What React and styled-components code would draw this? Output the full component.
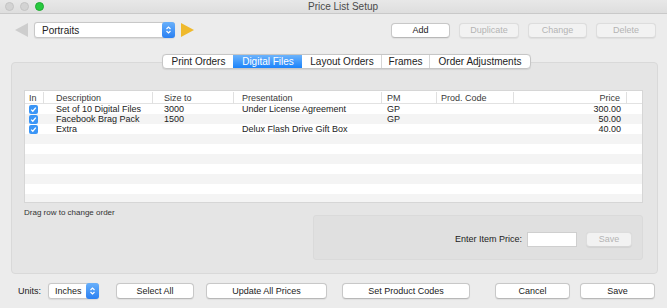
import React from "react"
import styled, { createGlobalStyle } from "styled-components"

const GlobalStyle = createGlobalStyle`
	html, body {
		margin: 0;
		padding: 0;
	}
	body {
		background: #ececec;
		font-family: "Liberation Sans", Arial, sans-serif;
		color: #222;
	}
	* {
		box-sizing: border-box;
	}
`

const Window = styled.div`
	width: 667px;
	height: 308px;
	overflow: hidden;
	display: flex;
	flex-direction: column;
	background: #ececec;
`

const TitleBar = styled.div`
	height: 14px;
	display: flex;
	align-items: center;
	padding-left: 5px;
	background: linear-gradient(#e8e8e8, #dedede);
	border-bottom: 1px solid #c9c9c9;
`

const Lights = styled.div`
	display: flex;
	gap: 6px;
`

const Light = styled.span`
	width: 9px;
	height: 9px;
	border-radius: 50%;
	background: ${(p) => (p.$on ? "#28c93f" : "#d3d3d3")};
	border: 1px solid ${(p) => (p.$on ? "#1eaa31" : "#c4c4c4")};
`

const Title = styled.div`
	margin-left: 264px;
	font-size: 10px;
	line-height: 13px;
	color: #4a4a4a;
`

const Toolbar = styled.div`
	display: flex;
	align-items: center;
	height: 16px;
	margin-top: 8px;
	padding: 0 11px 0 15px;
`

const Arrow = styled.span`
	width: 0;
	height: 0;
	border-top: 7px solid transparent;
	border-bottom: 7px solid transparent;
	${(p) =>
		p.$dir === "left"
			? `border-right: 13px solid #cdcdcd;`
			: `border-left: 13px solid #efb92c;`}
`

const Popup = styled.div`
	display: flex;
	align-items: center;
	justify-content: space-between;
	width: ${(p) => p.$w}px;
	height: 16px;
	margin: 0 6px;
	padding-left: ${(p) => p.$pad}px;
	background: #fff;
	border: 1px solid #c8c8c8;
	border-radius: 3px;
	box-shadow: 0 0.5px 1px rgba(0, 0, 0, 0.08);
	font-size: ${(p) => p.$fs}px;
	color: #222;
`

const Stepper = styled.span`
	width: 13px;
	height: 16px;
	margin: -1px -1px -1px 0;
	border-radius: 3px;
	background: linear-gradient(#68b0fb, #2a80f2);
	display: flex;
	align-items: center;
	justify-content: center;
`

const Spacer = styled.div`
	flex: 1;
`

const ButtonGroup = styled.div`
	display: flex;
	gap: ${(p) => p.$gap}px;
	align-items: center;
`

const Button = styled.div`
	width: ${(p) => p.$w}px;
	height: ${(p) => p.$h || 16}px;
	margin-left: ${(p) => p.$ml || 0}px;
	display: flex;
	align-items: center;
	justify-content: center;
	background: ${(p) => (p.$off ? "#f2f2f2" : "#fff")};
	border: 1px solid ${(p) => (p.$off ? "#dddddd" : "#c8c8c8")};
	border-bottom-color: ${(p) => (p.$off ? "#d6d6d6" : "#b8b8b8")};
	border-radius: 4px;
	box-shadow: 0 0.5px 1px rgba(0, 0, 0, 0.06);
	font-size: 9px;
	color: ${(p) => (p.$off ? "#b4b4b4" : "#222")};
`

const TabBar = styled.div`
	position: relative;
	z-index: 1;
	display: flex;
	margin-top: 16px;
	margin-left: 162px;
	height: 15px;
	align-self: flex-start;
	background: #fff;
	border: 1px solid #c6c6c6;
	border-radius: 4px;
	box-shadow: 0 0.5px 1px rgba(0, 0, 0, 0.08);
	overflow: hidden;
`

const Tab = styled.div`
	width: ${(p) => p.$w}px;
	display: flex;
	align-items: center;
	justify-content: center;
	font-size: 10px;
	color: ${(p) => (p.$active ? "#fff" : "#222")};
	background: ${(p) =>
		p.$active ? "linear-gradient(#6cb3fb, #1b83fb)" : "transparent"};
	border-left: 1px solid ${(p) => (p.$first ? "transparent" : "#d6d6d6")};
`

const GroupBox = styled.div`
	margin: -7px 9px 0 11px;
	height: 212px;
	padding: 27px 14px 0 12px;
	background: #e5e5e5;
	border: 1px solid #d9d9d9;
	border-radius: 4px;
	display: flex;
	flex-direction: column;
`

const cols = "19px 109px 81px 148px 55px 77px 113px 1fr"

const Table = styled.div`
	height: 113px;
	background: #fff;
	border: 1px solid #d6d6d6;
	overflow: hidden;
`

const HeaderRow = styled.div`
	display: grid;
	grid-template-columns: ${cols};
	height: 13px;
	border-bottom: 1px solid #e2e2e2;
`

const HeaderCell = styled.div`
	font-size: 9px;
	line-height: 12px;
	color: #3a3a3a;
	padding-left: ${(p) => p.$pad}px;
	padding-right: ${(p) => p.$pr || 0}px;
	text-align: ${(p) => p.$align || "left"};
	border-right: ${(p) => (p.$last ? "none" : "1px solid #e0e0e0")};
	margin: 1px 0;
`

const Row = styled.div`
	display: grid;
	grid-template-columns: ${cols};
	height: 10px;
	background: ${(p) => (p.$odd ? "#f4f4f4" : "#fff")};
`

const Cell = styled.div`
	font-size: 9px;
	line-height: 10px;
	color: #222;
	white-space: nowrap;
	padding-left: ${(p) => p.$pad}px;
	padding-right: ${(p) => p.$pr || 0}px;
	display: flex;
	align-items: center;
	justify-content: ${(p) => (p.$align === "right" ? "flex-end" : "flex-start")};
`

const Check = styled.span`
	width: 9px;
	height: 9px;
	border-radius: 2px;
	background: #3a95f6;
	display: flex;
	align-items: center;
	justify-content: center;
`

const BelowRow = styled.div`
	display: flex;
	justify-content: space-between;
	align-items: flex-start;
`

const Hint = styled.div`
	font-size: 8px;
	line-height: 10px;
	margin-top: 5px;
	color: #333;
`

const PriceBox = styled.div`
	width: 330px;
	height: 45px;
	margin-top: 12px;
	background: #e0e0e0;
	border: 1px solid #dadada;
	border-radius: 3px;
	display: flex;
	align-items: center;
	justify-content: flex-end;
	padding: 3px 10px 0 0;
`

const Label = styled.span`
	font-size: 9px;
	color: #222;
	margin-right: ${(p) => p.$mr}px;
`

const Input = styled.div`
	width: 50px;
	height: 15px;
	background: #fff;
	border: 1px solid #cfcfcf;
	margin-right: 9px;
`

const BottomBar = styled.div`
	display: flex;
	align-items: center;
	height: 16px;
	margin-top: 9px;
	padding-left: 18px;
`

const columns = [
	{ key: "in", label: "In", pad: 4 },
	{ key: "desc", label: "Description", pad: 12 },
	{ key: "size", label: "Size to", pad: 11 },
	{ key: "pres", label: "Presentation", pad: 8 },
	{ key: "pm", label: "PM", pad: 5 },
	{ key: "code", label: "Prod. Code", pad: 4 },
	{ key: "price", label: "Price", pad: 0, pr: 6, align: "right" },
	{ key: "fill", label: "", pad: 0, last: true },
]

const items = [
	{ desc: "Set of 10 Digital Files", size: "3000", pres: "Under License Agreement", pm: "GP", code: "", price: "300.00" },
	{ desc: "Facebook Brag Pack", size: "1500", pres: "", pm: "GP", code: "", price: "50.00" },
	{ desc: "Extra", size: "", pres: "Delux Flash Drive Gift Box", pm: "", code: "", price: "40.00" },
]

const tabs = [
	{ label: "Print Orders", w: 70 },
	{ label: "Digital Files", w: 69, active: true },
	{ label: "Layout Orders", w: 79 },
	{ label: "Frames", w: 48 },
	{ label: "Order Adjustments", w: 101 },
]

function StepIcon() {
	return (
		<svg width="7" height="10" viewBox="0 0 7 10">
			<path d="M1.5 4 L3.5 2 L5.5 4 M1.5 6 L3.5 8 L5.5 6" fill="none" stroke="#fff" strokeWidth="1.2" />
		</svg>
	)
}

function CheckIcon() {
	return (
		<svg width="7" height="7" viewBox="0 0 7 7">
			<path d="M1.2 3.6 L2.8 5.2 L5.8 1.6" fill="none" stroke="#fff" strokeWidth="1.3" />
		</svg>
	)
}

export default function App() {
	const rows = []
	for (let i = 0; i < 10; i++) {
		const item = items[i]
		rows.push(
			<Row key={i} $odd={i % 2 === 1}>
				{columns.map((c) => (
					<Cell key={c.key} $pad={c.pad} $pr={c.pr} $align={c.align}>
						{item && c.key === "in" ? (
							<Check>
								<CheckIcon />
							</Check>
						) : item ? (
							item[c.key]
						) : null}
					</Cell>
				))}
			</Row>
		)
	}

	return (
		<Window>
			<GlobalStyle />
			<TitleBar>
				<Lights>
					<Light />
					<Light />
					<Light $on />
				</Lights>
				<Title>Price List Setup</Title>
			</TitleBar>

			<Toolbar>
				<Arrow $dir="left" />
				<Popup $w={141} $pad={7} $fs={10}>
					Portraits
					<Stepper>
						<StepIcon />
					</Stepper>
				</Popup>
				<Arrow $dir="right" />
				<Spacer />
				<ButtonGroup $gap={9}>
					<Button $w={59} $h={15}>Add</Button>
					<Button $w={60} $h={15} $off>Duplicate</Button>
					<Button $w={59} $h={15} $off>Change</Button>
					<Button $w={60} $h={15} $off>Delete</Button>
				</ButtonGroup>
			</Toolbar>

			<TabBar>
				{tabs.map((t, i) => (
					<Tab key={t.label} $w={t.w} $active={t.active} $first={i === 0 || t.active || tabs[i - 1].active}>
						{t.label}
					</Tab>
				))}
			</TabBar>

			<GroupBox>
				<Table>
					<HeaderRow>
						{columns.map((c) => (
							<HeaderCell key={c.key} $pad={c.pad} $pr={c.pr} $align={c.align} $last={c.last}>
								{c.label}
							</HeaderCell>
						))}
					</HeaderRow>
					{rows}
				</Table>
				<BelowRow>
					<Hint>Drag row to change order</Hint>
					<PriceBox>
						<Label $mr={5}>Enter Item Price:</Label>
						<Input />
						<Button $w={46} $h={15} $off>Save</Button>
					</PriceBox>
				</BelowRow>
			</GroupBox>

			<BottomBar>
				<Label $mr={1}>Units:</Label>
				<Popup $w={51} $pad={6} $fs={9}>
					Inches
					<Stepper>
						<StepIcon />
					</Stepper>
				</Popup>
				<Button $w={78} $ml={11}>Select All</Button>
				<Button $w={121} $ml={12}>Update All Prices</Button>
				<Button $w={128} $ml={15}>Set Product Codes</Button>
				<Button $w={75} $ml={25}>Cancel</Button>
				<Button $w={75} $ml={10}>Save</Button>
			</BottomBar>
		</Window>
	)
}
